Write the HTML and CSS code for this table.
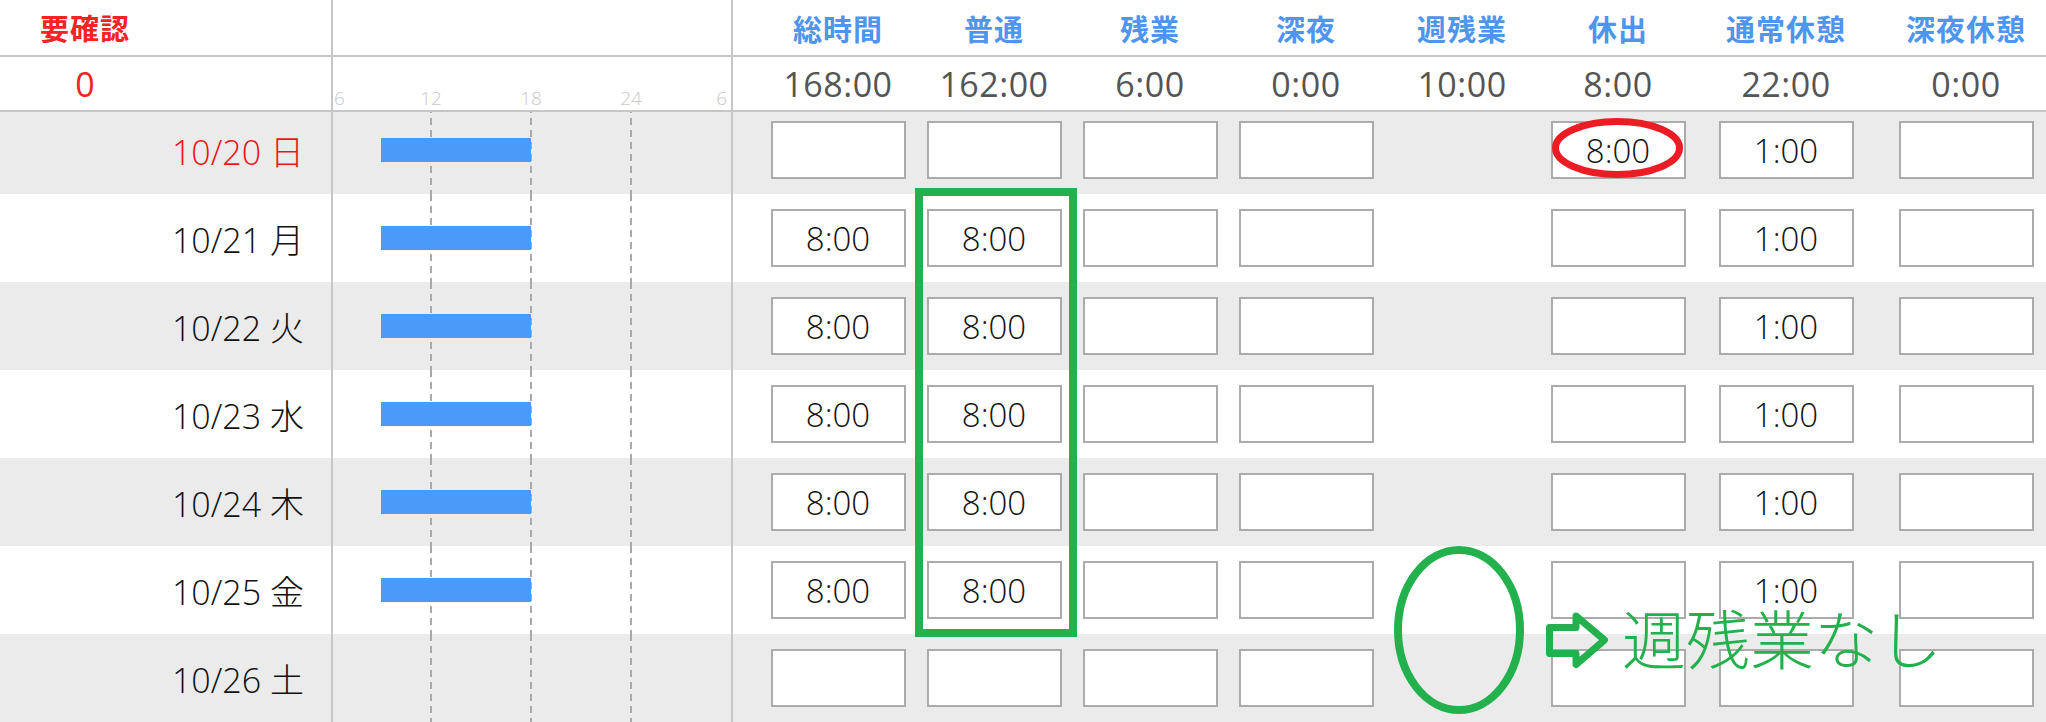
FILE: index.html
```html
<!DOCTYPE html>
<html lang="ja">
<head>
<meta charset="utf-8">
<title>勤務表</title>
<link rel="stylesheet" href="styles.css">
</head>
<body>
<div class="sheet">
  <div class="annot">
    <svg class="marks" width="2046" height="722" viewBox="0 0 2046 722">
      <rect x="919" y="192" width="154" height="441" fill="none" stroke="#22b14c" stroke-width="8"/>
      <ellipse cx="1617.5" cy="148" rx="62" ry="26.5" fill="none" stroke="#ec1c24" stroke-width="7"/>
      <ellipse cx="1459" cy="630" rx="61" ry="80" fill="none" stroke="#22b14c" stroke-width="8"/>
      <path d="M1549.5 627.5 H1576 V616 L1604.5 640 L1576 664.5 V653.5 H1549.5 Z" fill="none" stroke="#22b14c" stroke-width="7" stroke-linejoin="round"/>
    </svg>
    <div class="note">週残業なし</div>
  </div>

  <div class="head">
    <div class="grid hrow hrow1">
      <div class="lcell"><span class="tag">要確認</span></div>
      <div class="gantt"></div>
      <div class="pad"></div>
      <div class="hlabel">総時間</div>
      <div class="hlabel">普通</div>
      <div class="hlabel">残業</div>
      <div class="hlabel">深夜</div>
      <div class="hlabel">週残業</div>
      <div class="hlabel">休出</div>
      <div class="hlabel">通常休憩</div>
      <div class="hlabel">深夜休憩</div>
    </div>
    <div class="grid hrow hrow2">
      <div class="lcell"><span class="tag count">0</span></div>
      <div class="gantt ticks">
        <span class="t-first">6</span>
        <span>12</span>
        <span>18</span>
        <span>24</span>
        <span class="t-last">6</span>
      </div>
      <div class="pad"></div>
      <div class="hval">168:00</div>
      <div class="hval">162:00</div>
      <div class="hval">6:00</div>
      <div class="hval">0:00</div>
      <div class="hval">10:00</div>
      <div class="hval">8:00</div>
      <div class="hval">22:00</div>
      <div class="hval">0:00</div>
    </div>
  </div>

  <div class="rows">
    <div class="grid row alt">
      <div class="date sun">10/20 日</div>
      <div class="gantt lines"><div class="bar" style="left:48px;width:150px"></div></div>
      <div class="pad"></div>
      <div class="cell"><div class="box"></div></div>
      <div class="cell"><div class="box"></div></div>
      <div class="cell"><div class="box"></div></div>
      <div class="cell"><div class="box"></div></div>
      <div class="cell"></div>
      <div class="cell"><div class="box">8:00</div></div>
      <div class="cell"><div class="box">1:00</div></div>
      <div class="cell"><div class="box"></div></div>
    </div>
    <div class="grid row">
      <div class="date">10/21 月</div>
      <div class="gantt lines"><div class="bar" style="left:48px;width:150px"></div></div>
      <div class="pad"></div>
      <div class="cell"><div class="box">8:00</div></div>
      <div class="cell"><div class="box">8:00</div></div>
      <div class="cell"><div class="box"></div></div>
      <div class="cell"><div class="box"></div></div>
      <div class="cell"></div>
      <div class="cell"><div class="box"></div></div>
      <div class="cell"><div class="box">1:00</div></div>
      <div class="cell"><div class="box"></div></div>
    </div>
    <div class="grid row alt">
      <div class="date">10/22 火</div>
      <div class="gantt lines"><div class="bar" style="left:48px;width:150px"></div></div>
      <div class="pad"></div>
      <div class="cell"><div class="box">8:00</div></div>
      <div class="cell"><div class="box">8:00</div></div>
      <div class="cell"><div class="box"></div></div>
      <div class="cell"><div class="box"></div></div>
      <div class="cell"></div>
      <div class="cell"><div class="box"></div></div>
      <div class="cell"><div class="box">1:00</div></div>
      <div class="cell"><div class="box"></div></div>
    </div>
    <div class="grid row">
      <div class="date">10/23 水</div>
      <div class="gantt lines"><div class="bar" style="left:48px;width:150px"></div></div>
      <div class="pad"></div>
      <div class="cell"><div class="box">8:00</div></div>
      <div class="cell"><div class="box">8:00</div></div>
      <div class="cell"><div class="box"></div></div>
      <div class="cell"><div class="box"></div></div>
      <div class="cell"></div>
      <div class="cell"><div class="box"></div></div>
      <div class="cell"><div class="box">1:00</div></div>
      <div class="cell"><div class="box"></div></div>
    </div>
    <div class="grid row alt">
      <div class="date">10/24 木</div>
      <div class="gantt lines"><div class="bar" style="left:48px;width:150px"></div></div>
      <div class="pad"></div>
      <div class="cell"><div class="box">8:00</div></div>
      <div class="cell"><div class="box">8:00</div></div>
      <div class="cell"><div class="box"></div></div>
      <div class="cell"><div class="box"></div></div>
      <div class="cell"></div>
      <div class="cell"><div class="box"></div></div>
      <div class="cell"><div class="box">1:00</div></div>
      <div class="cell"><div class="box"></div></div>
    </div>
    <div class="grid row">
      <div class="date">10/25 金</div>
      <div class="gantt lines"><div class="bar" style="left:48px;width:150px"></div></div>
      <div class="pad"></div>
      <div class="cell"><div class="box">8:00</div></div>
      <div class="cell"><div class="box">8:00</div></div>
      <div class="cell"><div class="box"></div></div>
      <div class="cell"><div class="box"></div></div>
      <div class="cell"></div>
      <div class="cell"><div class="box"></div></div>
      <div class="cell"><div class="box">1:00</div></div>
      <div class="cell"><div class="box"></div></div>
    </div>
    <div class="grid row alt">
      <div class="date">10/26 土</div>
      <div class="gantt lines"></div>
      <div class="pad"></div>
      <div class="cell"><div class="box"></div></div>
      <div class="cell"><div class="box"></div></div>
      <div class="cell"><div class="box"></div></div>
      <div class="cell"><div class="box"></div></div>
      <div class="cell"></div>
      <div class="cell"><div class="box"></div></div>
      <div class="cell"><div class="box"></div></div>
      <div class="cell"><div class="box"></div></div>
    </div>
  </div>
</div>
</body>
</html>
```

FILE: styles.css
```css
html, body {
  margin: 0;
  padding: 0;
  background: #fff;
  overflow: hidden;
}

body {
  font-family: "Open Sans", "Noto Sans CJK JP", sans-serif;
  color: #111;
}

.sheet {
  position: relative;
  width: 2056px;
  height: 722px;
  overflow: hidden;
}

.grid {
  display: grid;
  grid-template-columns: 331px 402px 27px repeat(6, 156px) repeat(2, 180px);
  box-sizing: border-box;
}

/* header */
.head {
  position: relative;
  z-index: 1;
  background: #fff;
}

.hrow {
  border-bottom: 2px solid #c6c6c6;
}

.hrow1 {
  height: 57px;
}

.hrow2 {
  height: 55px;
}

.lcell {
  display: flex;
  align-items: center;
  padding-left: 40px;
}

.tag {
  display: block;
  width: 90px;
  white-space: nowrap;
  text-align: center;
  color: #f52424;
  font-family: "Noto Sans CJK JP", sans-serif;
  font-weight: 700;
  font-size: 29px;
  letter-spacing: 1px;
  line-height: 1;
}

.tag.count {
  font-family: "Open Sans", sans-serif;
  font-weight: 500;
  font-size: 34px;
  letter-spacing: 0;
  margin-top: 0;
}

.gantt {
  position: relative;
  border-left: 2px solid #c6c6c6;
  border-right: 2px solid #c6c6c6;
}

.hlabel {
  display: flex;
  align-items: center;
  justify-content: center;
  color: #4e95ef;
  font-family: "Noto Sans CJK JP", sans-serif;
  font-weight: 700;
  font-size: 29px;
  letter-spacing: 1px;
  white-space: nowrap;
}

.hval {
  display: flex;
  align-items: center;
  justify-content: center;
  color: #555;
  font-size: 34px;
  font-weight: 500;
  letter-spacing: 0.5px;
}

.ticks {
  display: grid;
  grid-template-columns: 48px 100px 100px 100px 50px;
  align-items: end;
  color: #c9c9c9;
  font-size: 19px;
  font-weight: 300;
  line-height: 1;
  padding-bottom: 2px;
}

.ticks span {
  text-align: center;
}

.ticks .t-first {
  text-align: left;
  padding-left: 1px;
}

.ticks .t-last {
  text-align: right;
  padding-right: 4px;
}

/* body rows */
.rows {
  margin-top: -6px;
}

.row {
  height: 88px;
}

.row.alt {
  background: #ebebeb;
}

.date {
  display: flex;
  align-items: center;
  justify-content: flex-end;
  padding-right: 27px;
  font-size: 34px;
  font-weight: 300;
  color: #111;
  white-space: nowrap;
}

.date.sun {
  color: #f01414;
}

.lines {
  background-image:
    repeating-linear-gradient(to bottom, #a9a9a9 0 7px, transparent 7px 12px),
    repeating-linear-gradient(to bottom, #a9a9a9 0 7px, transparent 7px 12px),
    repeating-linear-gradient(to bottom, #a9a9a9 0 7px, transparent 7px 12px);
  background-size: 2px 100%, 2px 100%, 2px 100%;
  background-position: 97px 0, 197px 0, 297px 0;
  background-repeat: no-repeat;
}

.bar {
  position: absolute;
  top: 32px;
  height: 24px;
  background: #4a9bf9;
}

.cell {
  display: flex;
  align-items: center;
  justify-content: center;
}

.box {
  box-sizing: border-box;
  width: 135px;
  height: 58px;
  border: 2px solid #ababab;
  background: #fff;
  display: flex;
  align-items: center;
  justify-content: center;
  font-size: 33px;
  font-weight: 300;
  color: #111;
}

/* annotations drawn over the sheet */
.annot {
  position: absolute;
  left: 0;
  top: 0;
  width: 2046px;
  height: 722px;
  z-index: 2;
  pointer-events: none;
}

.marks {
  display: block;
}

.note {
  position: absolute;
  left: 1622px;
  top: 604px;
  font-family: "Noto Sans CJK JP", sans-serif;
  font-size: 64px;
  line-height: 1;
  font-weight: 300;
  color: #22b14c;
  white-space: nowrap;
}
```
